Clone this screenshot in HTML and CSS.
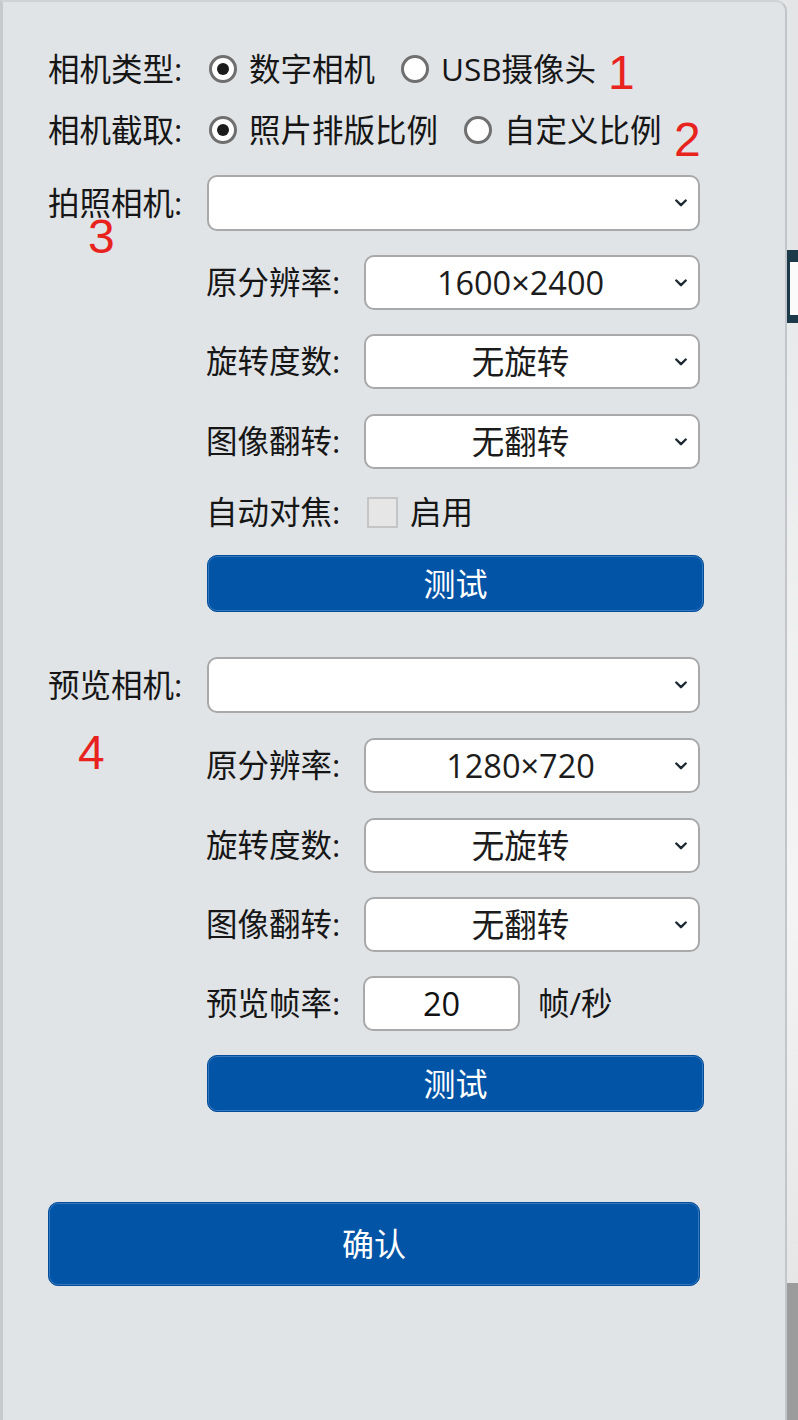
FILE: index.html
```html
<!DOCTYPE html>
<html lang="zh-CN">
<head>
<meta charset="utf-8">
<title>相机设置</title>
<link rel="stylesheet" href="styles.css">
</head>
<body>
<div class="screen">
  <div class="panel">
    <div class="row row-radio">
      <span class="label">相机类型:</span>
      <span class="option"><span class="radio checked"></span>数字相机</span>
      <span class="option"><span class="radio"></span>USB摄像头</span>
    </div>
    <div class="row row-radio row-radio-2">
      <span class="label">相机截取:</span>
      <span class="option"><span class="radio checked"></span>照片排版比例</span>
      <span class="option"><span class="radio"></span>自定义比例</span>
    </div>

    <div class="row row-main">
      <span class="label">拍照相机:</span>
      <div class="select select-wide">
        <span class="value"></span>
        <svg class="chev" width="12" height="8" viewBox="0 0 12 8"><polyline points="1.3,1.5 6,6.2 10.7,1.5" fill="none" stroke="#1e2a33" stroke-width="2.4" stroke-linecap="round" stroke-linejoin="round"/></svg>
      </div>
    </div>
    <div class="sub">
      <div class="row sub-row gap24">
        <span class="label sub-label">原分辨率:</span>
        <div class="select">
          <span class="value">1600×2400</span>
          <svg class="chev" width="12" height="8" viewBox="0 0 12 8"><polyline points="1.3,1.5 6,6.2 10.7,1.5" fill="none" stroke="#1e2a33" stroke-width="2.4" stroke-linecap="round" stroke-linejoin="round"/></svg>
        </div>
      </div>
      <div class="row sub-row gap24">
        <span class="label sub-label">旋转度数:</span>
        <div class="select">
          <span class="value">无旋转</span>
          <svg class="chev" width="12" height="8" viewBox="0 0 12 8"><polyline points="1.3,1.5 6,6.2 10.7,1.5" fill="none" stroke="#1e2a33" stroke-width="2.4" stroke-linecap="round" stroke-linejoin="round"/></svg>
        </div>
      </div>
      <div class="row sub-row gap25">
        <span class="label sub-label">图像翻转:</span>
        <div class="select">
          <span class="value">无翻转</span>
          <svg class="chev" width="12" height="8" viewBox="0 0 12 8"><polyline points="1.3,1.5 6,6.2 10.7,1.5" fill="none" stroke="#1e2a33" stroke-width="2.4" stroke-linecap="round" stroke-linejoin="round"/></svg>
        </div>
      </div>
      <div class="row check-row">
        <span class="label sub-label">自动对焦:</span>
        <span class="checkbox"></span>
        <span>启用</span>
      </div>
      <div class="btn btn-test">测试</div>
    </div>

    <div class="row row-main row-preview">
      <span class="label">预览相机:</span>
      <div class="select select-wide">
        <span class="value"></span>
        <svg class="chev" width="12" height="8" viewBox="0 0 12 8"><polyline points="1.3,1.5 6,6.2 10.7,1.5" fill="none" stroke="#1e2a33" stroke-width="2.4" stroke-linecap="round" stroke-linejoin="round"/></svg>
      </div>
    </div>
    <div class="sub">
      <div class="row sub-row gap25">
        <span class="label sub-label">原分辨率:</span>
        <div class="select">
          <span class="value">1280×720</span>
          <svg class="chev" width="12" height="8" viewBox="0 0 12 8"><polyline points="1.3,1.5 6,6.2 10.7,1.5" fill="none" stroke="#1e2a33" stroke-width="2.4" stroke-linecap="round" stroke-linejoin="round"/></svg>
        </div>
      </div>
      <div class="row sub-row gap25">
        <span class="label sub-label">旋转度数:</span>
        <div class="select">
          <span class="value">无旋转</span>
          <svg class="chev" width="12" height="8" viewBox="0 0 12 8"><polyline points="1.3,1.5 6,6.2 10.7,1.5" fill="none" stroke="#1e2a33" stroke-width="2.4" stroke-linecap="round" stroke-linejoin="round"/></svg>
        </div>
      </div>
      <div class="row sub-row gap24">
        <span class="label sub-label">图像翻转:</span>
        <div class="select">
          <span class="value">无翻转</span>
          <svg class="chev" width="12" height="8" viewBox="0 0 12 8"><polyline points="1.3,1.5 6,6.2 10.7,1.5" fill="none" stroke="#1e2a33" stroke-width="2.4" stroke-linecap="round" stroke-linejoin="round"/></svg>
        </div>
      </div>
      <div class="row sub-row gap24">
        <span class="label sub-label">预览帧率:</span>
        <div class="num-input">20</div>
        <span class="unit">帧/秒</span>
      </div>
      <div class="btn btn-test btn-test-2">测试</div>
    </div>

    <div class="btn btn-confirm">确认</div>
  </div>

  <div class="side">
    <div class="side-top"></div>
    <div class="side-icon"><div class="side-icon-inner"></div></div>
    <div class="side-mid"></div>
    <div class="side-bottom"></div>
  </div>

  <span class="note note-1">1</span>
  <span class="note note-2">2</span>
  <span class="note note-3">3</span>
  <span class="note note-4">4</span>
</div>
</body>
</html>
```

FILE: styles.css
```css
* { box-sizing: border-box; }

html, body {
  margin: 0;
  padding: 0;
}

body {
  width: 798px;
  height: 1420px;
  overflow: hidden;
  font-family: "Open Sans", "Noto Sans CJK SC", sans-serif;
  color: #161616;
  background: #e6e7e8;
}

.screen {
  position: relative;
  display: flex;
  width: 798px;
  height: 1420px;
}

.panel {
  flex: none;
  width: 787px;
  height: 1420px;
  background: #e1e4e7;
  border-left: 3px solid #c6cacd;
  border-top: 2px solid #d0d3d6;
  border-right: 2px solid #c2c6ca;
  border-top-right-radius: 11px;
  padding: 47px 0 0 45px;
  font-size: 31.5px;
  line-height: 1.1;
}

.row {
  display: flex;
  align-items: center;
  white-space: nowrap;
}

.label {
  flex: none;
  width: 159px;
}

.row-radio { height: 40px; }
.row-radio-2 { margin-top: 21px; }
.row-radio .label { width: 161px; }

.option {
  display: flex;
  align-items: center;
  gap: 12px;
  margin-right: 26px;
}

.radio {
  flex: none;
  width: 28px;
  height: 28px;
  border-radius: 50%;
  border: 3px solid #6f6f6f;
  background: #fff;
  display: flex;
  align-items: center;
  justify-content: center;
}

.radio.checked::after {
  content: "";
  width: 12px;
  height: 12px;
  border-radius: 50%;
  background: #1b1b1b;
}

.row-main {
  height: 56px;
  margin-top: 25px;
}

.row-preview { margin-top: 45px; }

.select {
  flex: none;
  display: flex;
  align-items: center;
  width: 336px;
  height: 55px;
  background: #fff;
  border: 2px solid #a9a9a9;
  border-radius: 10px;
}

.select-wide {
  width: 493px;
  height: 56px;
}

.select .value {
  flex: 1;
  text-align: center;
  font-size: 32.5px;
  color: #1c1c1c;
}

.chev {
  flex: none;
  margin-right: 11px;
}

.sub { margin-left: 158px; }

.sub-row { height: 55px; }
.gap24 { margin-top: 24px; }
.gap25 { margin-top: 25px; }

.sub-label { width: 158px; }

.check-row {
  height: 45px;
  margin-top: 21px;
}

.checkbox {
  flex: none;
  width: 31px;
  height: 31px;
  margin-left: 3px;
  margin-right: 12px;
  border: 2px solid #c5c5c5;
  background: #e6e6e6;
}

.num-input {
  flex: none;
  width: 157px;
  height: 55px;
  margin-left: -1px;
  background: #fff;
  border: 2px solid #a9a9a9;
  border-radius: 10px;
  display: flex;
  align-items: center;
  justify-content: center;
  font-size: 32.5px;
  color: #111;
}

.unit { margin-left: 18px; }

.btn {
  display: flex;
  align-items: center;
  justify-content: center;
  background: #0254a6;
  color: #fff;
  border: 1px solid #034e9b;
  border-radius: 10px;
  box-shadow: inset 0 0 0 1px rgba(120, 165, 215, 0.45);
  font-size: 32px;
}

.btn-test {
  width: 497px;
  height: 57px;
  margin-top: 20px;
  margin-left: 1px;
}

.btn-test-2 { margin-top: 24px; }

.btn-confirm {
  width: 652px;
  height: 84px;
  margin-top: 90px;
}

.side {
  flex: 1;
  display: flex;
  flex-direction: column;
}

.side-top {
  height: 250px;
  background: #e4e5e6;
}

.side-icon {
  height: 73px;
  background: #1d3a4b;
  padding: 12px 0 8px 3px;
}

.side-icon-inner {
  height: 100%;
  background: #fbfbfb;
}

.side-mid {
  flex: 1;
  background: linear-gradient(#e9eaeb, #f4f4f4 60%, #e6e6e6);
}

.side-bottom {
  height: 137px;
  background: #9c9c9c;
}

.note {
  position: absolute;
  color: #e8231e;
  font-family: "Liberation Sans", Arial, sans-serif;
  font-size: 48px;
  line-height: 1;
}

.note-1 { left: 608px; top: 49px; }
.note-2 { left: 674px; top: 116px; }
.note-3 { left: 88px; top: 213px; }
.note-4 { left: 78px; top: 729px; }
```
